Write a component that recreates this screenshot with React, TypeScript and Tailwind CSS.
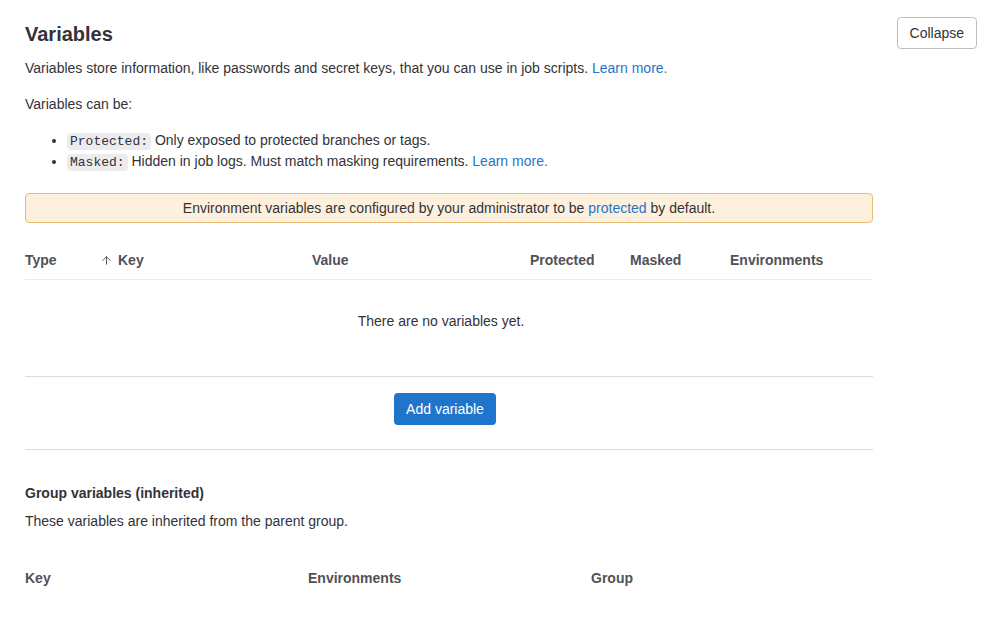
import { ArrowUp } from 'lucide-react';

const font = { fontFamily: '"Liberation Sans", Arial, sans-serif' };

const Code = ({ children }: { children: string }) => (
  <code className="rounded bg-[#ececef] px-[3px] py-[1px] text-[13px] leading-[16px] text-[#333238] font-['Liberation_Mono',monospace]">
    {children}
  </code>
);

const App = () => {
  return (
    <div className="min-h-screen bg-white text-[14px] text-[#333238]" style={font}>
      <div className="flex justify-between pl-[25px] pr-[22px] pt-[17px]">
        <div className="w-[848px]">
          <h4 className="mt-[3px] text-[20px] font-bold leading-[28px] text-[#333238]">Variables</h4>
          <p className="mt-[10px] leading-[20px]">
            Variables store information, like passwords and secret keys, that you can use in job scripts.{' '}
            <a className="text-[#1f75cb]">Learn more.</a>
          </p>
          <p className="mt-[16px] leading-[20px]">Variables can be:</p>
          <ul className="mt-[16px] list-disc pl-[42px] leading-[21px]">
            <li>
              <Code>Protected:</Code> Only exposed to protected branches or tags.
            </li>
            <li>
              <Code>Masked:</Code> Hidden in job logs. Must match masking requirements.{' '}
              <a className="text-[#1f75cb]">Learn more.</a>
            </li>
          </ul>

          <div className="mt-[21px] flex h-[30px] items-center justify-center rounded border border-[#e9be74] bg-[#fdf1dd]">
            Environment variables are configured by your administrator to be&nbsp;
            <a className="text-[#1f75cb]">protected</a>&nbsp;by default.
          </div>

          <div className="mt-[19px] flex h-[38px] items-center border-b border-[#ececef] font-bold text-[#535158]">
            <div className="w-[75px]">Type</div>
            <div className="flex w-[212px] items-center gap-[5px]">
              <ArrowUp size={13} strokeWidth={1.75} className="text-[#535158]" />
              Key
            </div>
            <div className="w-[218px]">Value</div>
            <div className="w-[100px]">Protected</div>
            <div className="w-[100px]">Masked</div>
            <div>Environments</div>
          </div>

          <div className="flex h-[97px] items-start justify-center border-b border-[#dcdcde] pr-[16px] pt-[31px] leading-[20px]">
            There are no variables yet.
          </div>

          <div className="flex h-[73px] items-start justify-center border-b border-[#dcdcde] pr-[8px] pt-[16px]">
            <button className="h-[32px] rounded bg-[#1f75cb] px-[12px] text-white">Add variable</button>
          </div>

          <h5 className="mt-[33px] font-bold leading-[20px]">Group variables (inherited)</h5>
          <p className="mt-[8px] leading-[20px]">These variables are inherited from the parent group.</p>

          <div className="mt-[37px] flex font-bold text-[#535158]">
            <div className="w-[283px]">Key</div>
            <div className="w-[283px]">Environments</div>
            <div>Group</div>
          </div>
        </div>

        <div>
          <button className="h-[32px] rounded border border-[#bfbfc3] bg-white px-[12px]">Collapse</button>
        </div>
      </div>
    </div>
  );
};

export default App;
